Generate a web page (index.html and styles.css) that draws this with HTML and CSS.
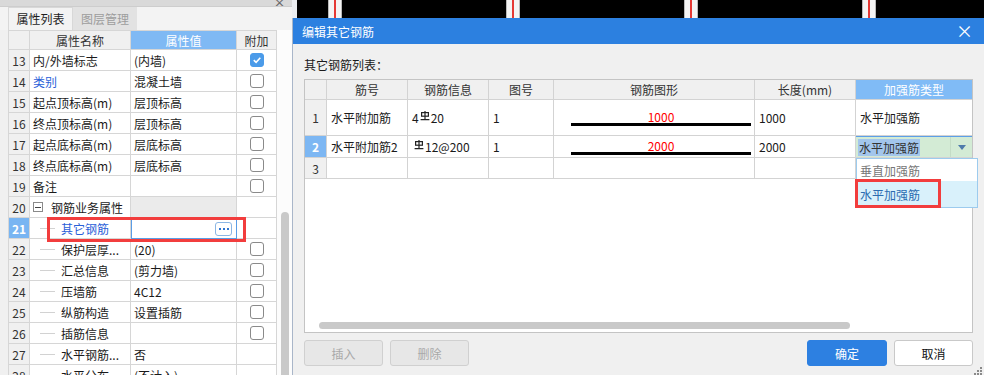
FILE: index.html
```html
<!DOCTYPE html>
<html lang="zh-CN">
<head>
    <meta charset="UTF-8">
    <title>编辑其它钢筋</title>
    <link rel="stylesheet" href="styles.css">
</head>
<body>
<div class="app">
    <aside class="prop-panel">
        <div class="panel-cap"><span>×</span></div>
        <div class="tabs">
            <div class="tab active">属性列表</div>
            <div class="tab muted">图层管理</div>
        </div>
        <div class="prop-body">
            <div class="prop-grid">
                <div class="prow head">
                    <div></div>
                    <div>属性名称</div>
                    <div class="sel">属性值</div>
                    <div>附加</div>
                </div>
                <div class="prow">
                    <div class="pnum">13</div>
                    <div class="pname">内/外墙标志</div>
                    <div class="pval">(内墙)</div>
                    <div class="padd"><span class="chk on"><svg width="10" height="10" viewBox="0 0 10 10"><path d="M1.8 5.2 L4.1 7.4 L8.3 2.8" stroke="#fff" stroke-width="1.6" fill="none"/></svg></span></div>
                </div>
                <div class="prow">
                    <div class="pnum">14</div>
                    <div class="pname blue">类别</div>
                    <div class="pval">混凝土墙</div>
                    <div class="padd"><span class="chk"></span></div>
                </div>
                <div class="prow">
                    <div class="pnum">15</div>
                    <div class="pname">起点顶标高(m)</div>
                    <div class="pval">层顶标高</div>
                    <div class="padd"><span class="chk"></span></div>
                </div>
                <div class="prow">
                    <div class="pnum">16</div>
                    <div class="pname">终点顶标高(m)</div>
                    <div class="pval">层顶标高</div>
                    <div class="padd"><span class="chk"></span></div>
                </div>
                <div class="prow">
                    <div class="pnum">17</div>
                    <div class="pname">起点底标高(m)</div>
                    <div class="pval">层底标高</div>
                    <div class="padd"><span class="chk"></span></div>
                </div>
                <div class="prow">
                    <div class="pnum">18</div>
                    <div class="pname">终点底标高(m)</div>
                    <div class="pval">层底标高</div>
                    <div class="padd"><span class="chk"></span></div>
                </div>
                <div class="prow">
                    <div class="pnum">19</div>
                    <div class="pname">备注</div>
                    <div class="pval"></div>
                    <div class="padd"><span class="chk"></span></div>
                </div>
                <div class="prow">
                    <div class="pnum">20</div>
                    <div class="pname"><span class="fold"></span>钢筋业务属性</div>
                    <div class="pval group"></div>
                    <div class="padd"></div>
                </div>
                <div class="prow current">
                    <div class="pnum">21</div>
                    <div class="pname sub blue"><span class="branch"></span>其它钢筋</div>
                    <div class="pval editing"><span class="more"><i></i><i></i><i></i></span></div>
                    <div class="padd"></div>
                </div>
                <div class="prow">
                    <div class="pnum">22</div>
                    <div class="pname sub"><span class="branch"></span>保护层厚...</div>
                    <div class="pval">(20)</div>
                    <div class="padd"><span class="chk"></span></div>
                </div>
                <div class="prow">
                    <div class="pnum">23</div>
                    <div class="pname sub"><span class="branch"></span>汇总信息</div>
                    <div class="pval">(剪力墙)</div>
                    <div class="padd"><span class="chk"></span></div>
                </div>
                <div class="prow">
                    <div class="pnum">24</div>
                    <div class="pname sub"><span class="branch"></span>压墙筋</div>
                    <div class="pval">4C12</div>
                    <div class="padd"><span class="chk"></span></div>
                </div>
                <div class="prow">
                    <div class="pnum">25</div>
                    <div class="pname sub"><span class="branch"></span>纵筋构造</div>
                    <div class="pval">设置插筋</div>
                    <div class="padd"><span class="chk"></span></div>
                </div>
                <div class="prow">
                    <div class="pnum">26</div>
                    <div class="pname sub"><span class="branch"></span>插筋信息</div>
                    <div class="pval"></div>
                    <div class="padd"><span class="chk"></span></div>
                </div>
                <div class="prow">
                    <div class="pnum">27</div>
                    <div class="pname sub"><span class="branch"></span>水平钢筋...</div>
                    <div class="pval">否</div>
                    <div class="padd"></div>
                </div>
                <div class="prow">
                    <div class="pnum">28</div>
                    <div class="pname sub"><span class="branch"></span>水平分布...</div>
                    <div class="pval">(不计入)</div>
                    <div class="padd"></div>
                </div>
                <div class="mark mark-prop"></div>
            </div>
            <div class="vscroll"><div class="thumb"></div></div>
        </div>
    </aside>

    <section class="workspace">
        <div class="canvas-strip">
            <span class="wall-line"></span>
            <span class="wall-line"></span>
            <span class="wall-line"></span>
            <span class="wall-line"></span>
        </div>
        <div class="dialog">
            <div class="dlg-title">
                <span>编辑其它钢筋</span>
                <span class="dlg-close">×</span>
            </div>
            <div class="dlg-body">
                <div class="dlg-label">其它钢筋列表：</div>
                <div class="grid-box">
                    <div class="brow head">
                        <div></div>
                        <div>筋号</div>
                        <div>钢筋信息</div>
                        <div>图号</div>
                        <div>钢筋图形</div>
                        <div>长度(mm)</div>
                        <div class="sel">加强筋类型</div>
                    </div>
                    <div class="brow tall">
                        <div class="bnum">1</div>
                        <div>水平附加筋</div>
                        <div>4<svg class="grade3" width="10" height="10" viewBox="0 0 10 10"><rect x="1.6" y="1.6" width="6.8" height="3.6" fill="none" stroke="#222" stroke-width="1.2"/><path d="M5 0 V8.6 M0.6 8.6 H9.4" stroke="#222" stroke-width="1.2" fill="none"/></svg>20</div>
                        <div>1</div>
                        <div class="shape"><div class="shape-fig"><span class="shape-len">1000</span><span class="shape-line"></span></div></div>
                        <div>1000</div>
                        <div>水平加强筋</div>
                    </div>
                    <div class="brow mid current">
                        <div class="bnum">2</div>
                        <div>水平附加筋2</div>
                        <div><svg class="grade3 lead" width="10" height="10" viewBox="0 0 10 10"><rect x="1.6" y="1.6" width="6.8" height="3.6" fill="none" stroke="#222" stroke-width="1.2"/><path d="M5 0 V8.6 M0.6 8.6 H9.4" stroke="#222" stroke-width="1.2" fill="none"/></svg>12@200</div>
                        <div>1</div>
                        <div class="shape"><div class="shape-fig"><span class="shape-len">2000</span><span class="shape-line"></span></div></div>
                        <div>2000</div>
                        <div class="combo">
                            <div class="combo-box">
                                <span class="combo-text">水平加强筋</span>
                                <span class="combo-btn"></span>
                            </div>
                            <div class="dropdown">
                                <div class="dd-item">垂直加强筋</div>
                                <div class="dd-item hover">水平加强筋</div>
                                <div class="mark mark-dd"></div>
                            </div>
                        </div>
                    </div>
                    <div class="brow">
                        <div class="bnum">3</div>
                        <div></div>
                        <div></div>
                        <div></div>
                        <div></div>
                        <div></div>
                        <div></div>
                    </div>
                    <div class="hscroll"><div class="thumb"></div></div>
                </div>
                <div class="dlg-actions">
                    <button class="btn" disabled>插入</button>
                    <button class="btn" disabled>删除</button>
                    <button class="btn primary">确定</button>
                    <button class="btn">取消</button>
                </div>
            </div>
            <svg class="grip" width="8" height="8" viewBox="0 0 8 8">
                <rect x="6" y="0" width="2" height="2" fill="#8a8a8a"/>
                <rect x="3" y="3" width="2" height="2" fill="#8a8a8a"/>
                <rect x="6" y="3" width="2" height="2" fill="#8a8a8a"/>
                <rect x="0" y="6" width="2" height="2" fill="#8a8a8a"/>
                <rect x="3" y="6" width="2" height="2" fill="#8a8a8a"/>
                <rect x="6" y="6" width="2" height="2" fill="#8a8a8a"/>
            </svg>
        </div>
    </section>
</div>
</body>
</html>
```

FILE: styles.css
```css
* {
    box-sizing: border-box;
}
body {
    margin: 0;
    width: 984px;
    height: 375px;
    overflow: hidden;
    background: #f0f0f0;
    font-family: "Noto Sans CJK SC", "Noto Sans", sans-serif;
    font-size: 12px;
    color: #1a1a1a;
}
.app {
    display: flex;
    height: 375px;
}

/* left: property list */
.prop-panel {
    width: 292px;
    flex: none;
    display: flex;
    flex-direction: column;
    background: #f0f0f0;
}
.panel-cap {
    height: 7px;
    flex: none;
    display: flex;
    justify-content: flex-end;
    align-items: flex-end;
    padding-right: 5px;
    overflow: hidden;
    background: #d9d9d9;
    border-bottom: 1px solid #cdcdcd;
}
.panel-cap span {
    font-size: 15px;
    line-height: 9px;
    color: #666;
}
.tabs {
    height: 23px;
    flex: none;
    display: flex;
    padding-left: 8px;
    background: #f3f3f3;
}
.tab {
    width: 65px;
    display: flex;
    align-items: center;
    justify-content: center;
    line-height: 16px;
}
.tab.active {
    background: #f3f3f3;
    color: #1e1e1e;
    border: 1px solid #d8d8d8;
    border-bottom: none;
}
.tab.muted {
    width: 64px;
    background: #e2e2e2;
    color: #9d9d9d;
}
.prop-body {
    flex: 1;
    min-height: 0;
    display: flex;
    padding-left: 8px;
}
.prop-grid {
    position: relative;
    width: 269px;
    background: #fff;
    border-left: 1px solid #d6d6d6;
    border-top: 1px solid #d6d6d6;
}
.prow {
    display: grid;
    grid-template-columns: 21px 101px 106px 40px;
    height: 21px;
}
.prow > div {
    display: flex;
    align-items: center;
    white-space: nowrap;
    overflow: hidden;
    border-right: 1px solid #d6d6d6;
    border-bottom: 1px solid #d6d6d6;
}
.prow.head {
    height: 19px;
}
.prow.head > div {
    justify-content: center;
    background: #f0f0f0;
    color: #333;
}
.prow.head > .sel {
    background: #7fb9f4;
    color: #fff;
}
.pnum {
    justify-content: center;
    background: #f0f0f0;
    color: #333;
}
.pname,
.pval {
    padding-left: 3px;
}
.pname.sub {
    padding-left: 0;
}
.padd {
    justify-content: center;
}
.blue {
    color: #2a60d8;
}
.pval.group {
    background: #ebebeb;
}
.prow.current .pnum {
    background: #79b5f2;
    color: #fff;
    font-weight: bold;
}
.pval.editing {
    justify-content: flex-end;
    padding-right: 4px;
    border: 1px solid #5a9de6;
}
.more {
    width: 17px;
    height: 14px;
    display: flex;
    align-items: center;
    justify-content: center;
    gap: 2px;
    background: #fff;
    border: 1px solid #8bb6e4;
    border-radius: 3px;
}
.more i {
    width: 2px;
    height: 2px;
    background: #2f75cf;
}
.chk {
    width: 14px;
    height: 14px;
    display: flex;
    align-items: center;
    justify-content: center;
    background: #fff;
    border: 1px solid #8a8a8a;
    border-radius: 3px;
}
.chk.on {
    background: #4b9be9;
    border-color: #4b9be9;
}
.fold {
    width: 10px;
    height: 10px;
    flex: none;
    display: flex;
    align-items: center;
    justify-content: center;
    margin-right: 8px;
    background: #fff;
    border: 1px solid #8a8a8a;
}
.fold::before {
    content: "";
    width: 6px;
    height: 1px;
    background: #444;
}
.branch {
    width: 15px;
    height: 1px;
    flex: none;
    margin: 0 6px 0 10px;
    background: #d2d2d2;
}
.vscroll {
    width: 15px;
    padding: 182px 0 0 4px;
    background: #fcfcfc;
}
.vscroll .thumb {
    width: 8px;
    height: 200px;
    background: #c9c9c9;
    border-radius: 4px;
}

/* red annotation boxes */
.mark {
    position: absolute;
    border: 3px solid #f23d3d;
    pointer-events: none;
}
.mark-prop {
    left: 38px;
    top: 186px;
    width: 199px;
    height: 25px;
}

/* right: drawing + dialog */
.workspace {
    flex: 1;
    min-width: 0;
    display: flex;
    flex-direction: column;
}
.canvas-strip {
    height: 18px;
    flex: none;
    display: flex;
    gap: 164px;
    padding-left: 31px;
    background: #000;
    border-left: 5px solid #eceef1;
}
.wall-line {
    width: 14px;
    background: linear-gradient(to right, #b9b9b9 0 1px, #f4f4f4 1px 6px, #e53935 6px 8px, #f4f4f4 8px 13px, #b9b9b9 13px);
}
.dialog {
    position: relative;
    flex: 1;
    display: flex;
    flex-direction: column;
    background: #f0f0f0;
    border-left: 1px solid #a9b6c9;
}
.dlg-title {
    height: 26px;
    flex: none;
    display: flex;
    align-items: center;
    justify-content: space-between;
    padding: 0 11px 0 9px;
    background: #2c80e0;
    color: #fff;
}
.dlg-close {
    font-size: 17px;
    line-height: 20px;
}
.dlg-body {
    padding: 12px 11px 0 11px;
}
.dlg-label {
    line-height: 18px;
    margin-bottom: 5px;
}
.grid-box {
    height: 254px;
    display: flex;
    flex-direction: column;
    background: #fff;
    border: 1px solid #c4c4c4;
}
.brow {
    display: grid;
    grid-template-columns: 22px 81px 81px 65px 201px 101px 116px;
    height: 21px;
    flex: none;
}
.brow > div {
    display: flex;
    align-items: center;
    padding-left: 4px;
    white-space: nowrap;
    border-right: 1px solid #d3d3d3;
    border-bottom: 1px solid #d3d3d3;
}
.brow > div:last-child {
    border-right: none;
}
.brow.head {
    height: 20px;
}
.brow.head > div {
    justify-content: center;
    padding-left: 0;
    background: #f0f0f0;
    color: #333;
}
.brow.head > .sel {
    background: #80bbf6;
    color: #fff;
}
.brow.tall {
    height: 36px;
}
.brow.mid {
    height: 22px;
}
.brow > .bnum {
    justify-content: center;
    padding-left: 0;
    background: #f0f0f0;
    color: #333;
}
.brow.current > .bnum {
    background: #7db7f3;
    color: #fff;
    font-weight: bold;
}
.grade3 {
    flex: none;
    margin: 0 1px 0 1px;
    position: relative;
    top: -2px;
}
.grade3.lead {
    margin-left: 2px;
}
.brow > .shape {
    padding: 0 3px 0 17px;
}
.shape-fig {
    flex: 1;
    display: flex;
    flex-direction: column;
    align-items: center;
}
.shape-len {
    color: #f00;
    line-height: 13px;
}
.shape-line {
    align-self: stretch;
    height: 3px;
    background: #000;
}
.brow > .combo {
    position: relative;
    padding-left: 0;
    align-items: stretch;
}
.combo-box {
    flex: 1;
    display: flex;
    align-items: center;
    background: #d3ebd5;
    border-top: 1px solid #5c9fe8;
}
.combo-text {
    margin-left: 2px;
    padding: 0 1px;
    line-height: 17px;
    background: #a3c6ec;
    color: #333;
}
.combo-btn {
    width: 22px;
    margin-left: auto;
    align-self: stretch;
    display: flex;
    align-items: center;
    justify-content: center;
    border-left: 1px solid #c4dcc6;
}
.combo-btn::before {
    content: "";
    border-left: 4px solid transparent;
    border-right: 4px solid transparent;
    border-top: 5px solid #4f7bab;
}
.dropdown {
    position: absolute;
    left: 0;
    top: 22px;
    width: 122px;
    z-index: 2;
    background: #fff;
    border: 1px solid #9ccbee;
}
.dd-item {
    height: 22px;
    display: flex;
    align-items: center;
    padding-left: 3px;
    color: #777;
}
.dd-item.hover {
    height: 26px;
    background: #d9f1fb;
    color: #2b6bb0;
}
.mark-dd {
    left: -2px;
    top: 20px;
    width: 86px;
    height: 29px;
}
.hscroll {
    margin-top: auto;
    padding: 0 0 3px 14px;
}
.hscroll .thumb {
    width: 531px;
    height: 7px;
    background: #c9c9c9;
    border-radius: 4px;
}
.dlg-actions {
    display: flex;
    gap: 7px;
    margin-top: 7px;
}
.btn {
    width: 79px;
    height: 26px;
    padding: 0;
    font: inherit;
    color: #111;
    background: #fff;
    border: 1px solid #c9c9c9;
    border-radius: 3px;
}
.btn:disabled {
    color: #a9a9a9;
    background: #e7e7e7;
    border-color: #d0d0d0;
}
.btn.primary {
    width: 80px;
    margin-left: auto;
    color: #fff;
    background: #2d80e1;
    border-color: #2d80e1;
}
.grip {
    position: absolute;
    right: 2px;
    bottom: 0;
}
```
